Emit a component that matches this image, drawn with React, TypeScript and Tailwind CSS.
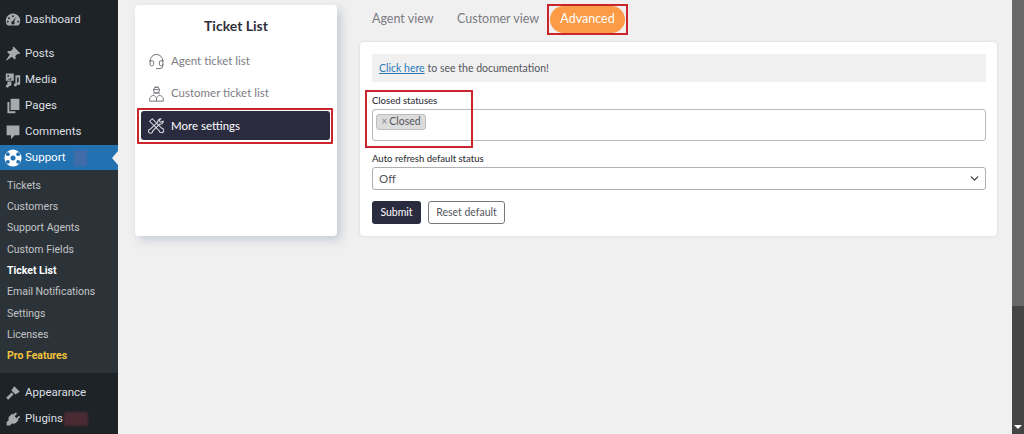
import { ChevronDown, Headset } from "lucide-react";
import type { ReactNode } from "react";

const ink = "#a7aaad";

function MenuIcon({ children }: { children: ReactNode }) {
  return (
    <svg viewBox="0 0 20 20" fill={ink} className="h-[16px] w-[16px] shrink-0">
      {children}
    </svg>
  );
}

const topItems: { label: string; icon: ReactNode }[] = [
  {
    label: "Posts",
    icon: <path d="M11 1l8 8-1.600 1.200-1.400-.6-3 3 .3 3.200-1.400 1.200-3.200-3.600L2 18l-.6-.6 4.600-6.700L2.600 7.500 3.800 6.100 7 6.400l3-3-.6-1.400z" />,
  },
  {
    label: "Media",
    icon: (
      <>
        <path d="M1 2h10v9H1zM3 4v2h2V4zM7 7.500 8.500 9.500H3.500L5 8l1 .8z" fillRule="evenodd" />
        <path d="M13 4h6v10.500a2 2 0 1 1-2-2V7h-2v9a2 2 0 1 1-2-2z" />
        <path d="M3 12h5v3.500a2 2 0 1 1-2-2H5v4a2 2 0 1 1-2-2z" />
      </>
    ),
  },
  {
    label: "Pages",
    icon: (
      <>
        <path d="M7 1h11v14H7z" />
        <path d="M3 5h2.500v11.500H13V19H3z" />
      </>
    ),
  },
  {
    label: "Comments",
    icon: <path d="M2 2h16v12h-6l-4.500 5v-5H2z" />,
  },
];

const subItems = ["Tickets", "Customers", "Support Agents", "Custom Fields", "Ticket List", "Email Notifications", "Settings", "Licenses", "Pro Features"];

function SupportIcon() {
  return (
    <svg viewBox="0 0 20 20" className="h-[18px] w-[18px] shrink-0">
      <circle cx="10" cy="10" r="9.500" fill="#fff" />
      <circle cx="10" cy="10" r="2.800" fill="#2271b1" />
      <circle cx="4.300" cy="5.800" r="2.100" fill="#2271b1" />
      <circle cx="15.700" cy="5.800" r="2.100" fill="#2271b1" />
      <circle cx="4.300" cy="14.200" r="2.100" fill="#2271b1" />
      <circle cx="15.700" cy="14.200" r="2.100" fill="#2271b1" />
    </svg>
  );
}

function Sidebar() {
  return (
    <aside className="flex h-[434px] w-[118px] shrink-0 flex-col overflow-hidden bg-[#1d2327] font-['Roboto',sans-serif] text-[11.500px] text-[#dcdfe2]">
      <div className="mt-[7px] flex h-[26px] items-center gap-[4px] pl-[5px]">
        <MenuIcon>
          <path
            fillRule="evenodd"
            d="M10 2a9 9 0 0 0-8 13.200L3.500 17h13l1.500-1.800A9 9 0 0 0 10 2zM10 4a1.200 1.200 0 1 1 0 2.400A1.200 1.200 0 0 1 10 4zM5 6.500a1.200 1.200 0 1 1 0 2.400 1.200 1.200 0 0 1 0-2.400zM3.500 10.800a1.200 1.200 0 1 1 0 2.400 1.200 1.200 0 0 1 0-2.400zM16.500 10.800a1.200 1.200 0 1 1 0 2.400 1.200 1.200 0 0 1 0-2.400zM14 6l-2.600 6.200a2 2 0 1 1-1.700-.7z"
          />
        </MenuIcon>
        <span>Dashboard</span>
      </div>
      <div className="mt-[8px] flex flex-col">
        {topItems.map((item) => (
          <div key={item.label} className="flex h-[26px] items-center gap-[4px] pl-[5px]">
            <MenuIcon>{item.icon}</MenuIcon>
            <span>{item.label}</span>
          </div>
        ))}
      </div>
      <div className="relative flex h-[25px] items-center gap-[3px] bg-[#2271b1] pl-[4px] text-white">
        <SupportIcon />
        <span>Support</span>
        <span className="ml-[5px] h-[16px] w-[13px] bg-[#4f6aa5]/70 blur-[1px]" />
        <span className="absolute right-0 top-1/2 h-0 w-0 -translate-y-1/2 border-y-[7px] border-r-[6px] border-y-transparent border-r-[#f0f0f0]" />
      </div>
      <div className="flex h-[203px] flex-col bg-[#2c3338] pt-[5px] text-[10.500px] text-[#c3c4c7]">
        {subItems.map((label) => (
          <div
            key={label}
            className={
              label === "Ticket List"
                ? "flex h-[21.300px] items-center pl-[7px] font-bold text-white"
                : label === "Pro Features"
                  ? "flex h-[21.300px] items-center pl-[7px] font-bold text-[#f0c33c]"
                  : "flex h-[21.300px] items-center pl-[7px]"
            }
          >
            {label}
          </div>
        ))}
      </div>
      <div className="mt-[7px] flex h-[26px] items-center gap-[4px] pl-[5px]">
        <MenuIcon>
          <path d="M11.500 1.500 18.500 8.500 13 12 8 7z" />
          <path d="M8.300 9.300 10.700 11.700 4 18.500 1.500 16z" />
        </MenuIcon>
        <span>Appearance</span>
      </div>
      <div className="flex h-[25px] items-center gap-[4px] pl-[5px]">
        <MenuIcon>
          <path d="M13.500 2l1.500 1.500-3 3 2.500 2.500 3-3L19 7.500l-3 3 1 1-3.500 3.500c-1.600 1.200-3.300 1.200-4.500.3L6 18H2v-4l2.800-2.700c-.9-1.400-.6-3 .5-4.300L9 3.500l1 1z" />
        </MenuIcon>
        <span>Plugins</span>
        <span className="-ml-[3px] h-[14px] w-[24px] bg-[#4a2a33] blur-[1px]" />
      </div>
    </aside>
  );
}

function TicketCard() {
  return (
    <div className="h-[231px] w-[202px] shrink-0 rounded-[4px] bg-white pt-[10px] shadow-[4px_4px_10px_rgba(120,135,165,0.35)]">
      <h2 className="text-center text-[14px] leading-[22px] font-bold text-[#2f2f3a]">Ticket List</h2>
      <div className="mt-[8px] flex flex-col pl-[6px] pr-[7px] text-[11.500px] text-[#7d7d84]">
        <div className="flex h-[32px] items-center gap-[6px] pl-[7px]">
          <Headset className="h-[17px] w-[17px] shrink-0 text-[#707077]" strokeWidth={1.4} />
          <span>Agent ticket list</span>
        </div>
        <div className="flex h-[32px] items-center gap-[6px] pl-[7px]">
          <svg viewBox="0 0 20 20" fill="none" stroke="#707077" strokeWidth="1.100" className="h-[17px] w-[17px] shrink-0">
            <circle cx="10" cy="6" r="3.500" />
            <path d="M6 5.500h8M7.500 2.500h5M6 9.500h8" />
            <path d="M2 19v-3c0-2 2.500-3.500 5-4l3 3 3-3c2.500.5 5 2 5 4v3zM10 15v4" />
          </svg>
          <span>Customer ticket list</span>
        </div>
        <div className="relative mt-[2px] flex h-[29px] items-center gap-[6px] rounded-[3px] bg-[#2b2b40] pl-[7px] text-white">
          <svg viewBox="0 0 20 20" fill="none" stroke="#d8d8de" strokeWidth="1.200" className="h-[17px] w-[17px] shrink-0">
            <path d="M2 5l3-3 11 11 2 1 .5 3-1.500 1.500-3-.5-1-2z" />
            <path d="M18 5a3.500 3.500 0 0 1-4.500 3.300L5.500 16.500A2.500 2.500 0 1 1 3 14l8.500-8A3.500 3.500 0 0 1 15 2l-2 2.500 2 1.500z" />
          </svg>
          <span>More settings</span>
          <span className="absolute -left-[4px] -right-[3px] -top-[3px] -bottom-[4px] rounded-[1px] border-2 border-[#c9252b]" />
        </div>
      </div>
    </div>
  );
}

function SettingsPanel() {
  return (
    <div className="flex w-[637px] shrink-0 flex-col">
      <div className="mb-[4px] flex h-[38px] items-center pl-[12px] text-[12.500px] text-[#7b7b82]">
        <span className="w-[85px]">Agent view</span>
        <span className="w-[93px]">Customer view</span>
        <div className="relative">
          <span className="flex h-[27px] w-[75px] items-center justify-center rounded-full bg-[#fd9a46] text-white">Advanced</span>
          <span className="absolute -inset-x-[3px] -inset-y-[2px] border-2 border-[#c9252b]" />
        </div>
      </div>
      <div className="h-[194px] rounded-[4px] bg-white pl-[12px] pr-[11px] pt-[12px] shadow-[0_0_3px_rgba(0,0,0,0.12)]">
        <div className="flex h-[28px] items-center bg-[#f0f0f0] pl-[7px] pt-[1px] text-[10.500px] text-[#55555c]">
          <a className="text-[#2a7ab8] underline">Click here</a>
          <span className="ml-[3px]">to see the documentation!</span>
        </div>
        <div className="relative mt-[12px]">
          <label className="block text-[9.500px] leading-[14px] font-medium text-[#33333a]">Closed statuses</label>
          <div className="mt-[1px] h-[32px] rounded-[3px] border border-[#b9b9bd] pl-[3px] pt-[4px]">
            <span className="flex h-[16px] w-[50px] items-center justify-center gap-[2px] rounded-[3px] border border-[#bdbdbd] bg-[#dcdcdc] text-[10.500px] text-[#55555c]">
              <span className="text-[#888]">×</span> Closed
            </span>
          </div>
          <span className="absolute -left-[7px] -top-[4px] h-[58px] w-[108px] border-2 border-[#c9252b]" />
        </div>
        <label className="mt-[11px] block text-[9.500px] leading-[14px] font-medium text-[#33333a]">Auto refresh default status</label>
        <div className="mt-[1px] flex h-[23px] items-center justify-between rounded-[3px] border border-[#b0b0b4] pl-[6px] pr-[4px] text-[11.500px] text-[#55555c]">
          <span>Off</span>
          <ChevronDown className="h-[13px] w-[13px] text-[#444]" strokeWidth={2.5} />
        </div>
        <div className="mt-[11px] flex gap-[7px]">
          <button className="h-[23px] w-[49px] rounded-[3px] bg-[#2b2b40] text-[10.500px] text-white">Submit</button>
          <button className="h-[23px] w-[77px] rounded-[3px] border border-[#77777c] bg-white text-[10.500px] text-[#55555c]">Reset default</button>
        </div>
      </div>
    </div>
  );
}

export default function App() {
  return (
    <div className="flex h-[434px] w-[1024px] overflow-hidden bg-[#f0f0f0] font-['Lato','Open_Sans',sans-serif]">
      <Sidebar />
      <main className="flex flex-1 gap-[23px] pl-[17px]">
        <div className="pt-[5px]">
          <TicketCard />
        </div>
        <SettingsPanel />
      </main>
      <div className="flex w-[12px] shrink-0 flex-col justify-end bg-[#686868]">
        <div className="flex h-[128px] items-end justify-center bg-[#444444] pb-[5px]">
          <span className="h-0 w-0 border-x-[4px] border-t-[4px] border-x-transparent border-t-white" />
        </div>
      </div>
    </div>
  );
}
